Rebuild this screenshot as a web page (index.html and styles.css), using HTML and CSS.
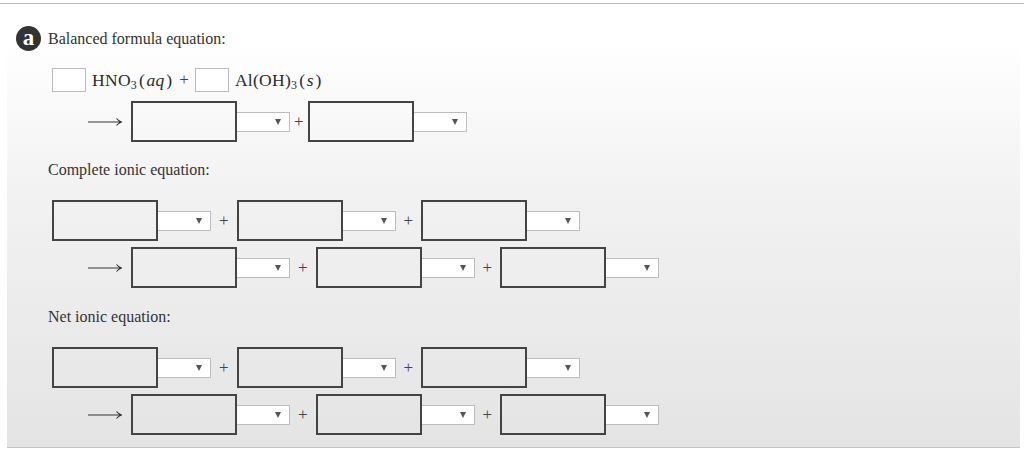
FILE: index.html
```html
<!DOCTYPE html>
<html lang="en">
<head>
    <meta charset="UTF-8">
    <title>Equations</title>
    <link rel="stylesheet" href="styles.css">
</head>
<body>
    <div class="topline"></div>
    <div class="panel">
        <div class="heading">
            <span class="badge">a</span>
            <span>Balanced formula equation:</span>
        </div>

        <div class="row formula">
            <input class="coef" type="text">
            <span class="chem">HNO<sub>3</sub>&#8202;(<i>aq</i>)</span>
            <span class="op">+</span>
            <input class="coef" type="text">
            <span class="chem">Al(OH)<sub>3</sub>&#8202;(<i>s</i>)</span>
        </div>

        <div class="row arrowed tight">
            <svg class="arrow" width="34" height="10" viewBox="0 0 34 10"><path d="M0 5H33M28.5 1.5Q30.5 4 33.5 5Q30.5 6 28.5 8.5" /></svg>
            <input class="species" type="text"><span class="pick"><i class="caret"></i></span>
            <span class="op">+</span>
            <input class="species" type="text"><span class="pick"><i class="caret"></i></span>
        </div>

        <div class="label">Complete ionic equation:</div>

        <div class="row first">
            <input class="species" type="text"><span class="pick"><i class="caret"></i></span>
            <span class="op">+</span>
            <input class="species" type="text"><span class="pick"><i class="caret"></i></span>
            <span class="op">+</span>
            <input class="species" type="text"><span class="pick"><i class="caret"></i></span>
        </div>
        <div class="row arrowed">
            <svg class="arrow" width="34" height="10" viewBox="0 0 34 10"><path d="M0 5H33M28.5 1.5Q30.5 4 33.5 5Q30.5 6 28.5 8.5" /></svg>
            <input class="species" type="text"><span class="pick"><i class="caret"></i></span>
            <span class="op">+</span>
            <input class="species" type="text"><span class="pick"><i class="caret"></i></span>
            <span class="op">+</span>
            <input class="species" type="text"><span class="pick"><i class="caret"></i></span>
        </div>

        <div class="label">Net ionic equation:</div>

        <div class="row first">
            <input class="species" type="text"><span class="pick"><i class="caret"></i></span>
            <span class="op">+</span>
            <input class="species" type="text"><span class="pick"><i class="caret"></i></span>
            <span class="op">+</span>
            <input class="species" type="text"><span class="pick"><i class="caret"></i></span>
        </div>
        <div class="row arrowed">
            <svg class="arrow" width="34" height="10" viewBox="0 0 34 10"><path d="M0 5H33M28.5 1.5Q30.5 4 33.5 5Q30.5 6 28.5 8.5" /></svg>
            <input class="species" type="text"><span class="pick"><i class="caret"></i></span>
            <span class="op">+</span>
            <input class="species" type="text"><span class="pick"><i class="caret"></i></span>
            <span class="op">+</span>
            <input class="species" type="text"><span class="pick"><i class="caret"></i></span>
        </div>
    </div>
</body>
</html>
```

FILE: styles.css
```css
body {
    margin: 0;
    font-family: "Liberation Serif", "Times New Roman", serif;
    font-size: 16px;
    color: #333;
    background-color: #fff;
}

.topline {
    height: 3px;
    border-bottom: 1px solid #bdbdbd;
}

.panel {
    box-sizing: border-box;
    height: 444px;
    margin: 0 4px 0 7px;
    padding: 22px 0 0 41px;
    background: linear-gradient(#fff 8%, #f1f1f1 45%, #e4e4e4 100%);
    border-bottom: 1px solid #c4c4c4;
}

.heading {
    display: flex;
    align-items: center;
    gap: 7px;
    height: 25px;
    margin-left: -32px;
}

.badge {
    display: flex;
    align-items: center;
    justify-content: center;
    width: 25px;
    height: 25px;
    border-radius: 50%;
    background-color: #333;
    color: #fff;
    font-weight: bold;
    font-size: 23px;
    line-height: 1;
    padding-bottom: 2px;
    box-sizing: border-box;
}

.label {
    height: 20px;
    line-height: 20px;
    margin-top: 18px;
}

.row {
    display: flex;
    align-items: center;
    margin-left: 4px;
}

.row.formula {
    margin-top: 17px;
}

.row.arrowed {
    margin-top: 6px;
}

.row.arrowed.tight {
    margin-top: 9px;
}

.row.first {
    margin-top: 20px;
}

.row.first + .row.arrowed + .label {
    margin-top: 19px;
}

input {
    box-sizing: border-box;
    margin: 0;
    padding: 0;
    outline: none;
}

.coef {
    width: 34px;
    height: 24px;
    border: 1px solid #bdbdbd;
    background-color: #fff;
}

.chem {
    margin-left: 6px;
    font-size: 17.5px;
    color: #2b2b2b;
    letter-spacing: 0.3px;
}

.chem sub {
    font-size: 12px;
    vertical-align: -3px;
    line-height: 0;
}

.chem i {
    padding: 0 1.5px;
}

.op {
    margin: 0 8px;
    font-size: 17px;
    color: #444;
}

.formula .op {
    margin: 0 6px 0 7px;
}

.tight .op {
    margin: 0 4px;
}

.arrow {
    margin: 0 9px 0 36px;
}

.arrow path {
    fill: none;
    stroke: #333;
    stroke-width: 1.2;
}

.species {
    width: 106px;
    height: 41px;
    border: 2px solid #444;
    background-color: transparent;
}

.pick {
    box-sizing: border-box;
    display: flex;
    align-items: center;
    justify-content: flex-end;
    width: 53px;
    height: 20px;
    padding-right: 8px;
    background-color: #fff;
    border: 1px solid #bdbdbd;
    border-left: none;
}

.caret {
    width: 0;
    height: 0;
    border-left: 3px solid transparent;
    border-right: 3px solid transparent;
    border-top: 6px solid #555;
}
```
